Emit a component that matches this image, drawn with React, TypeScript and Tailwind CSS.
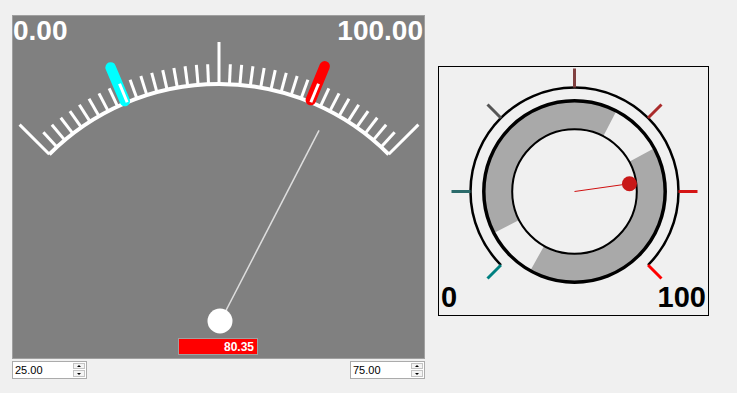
import React from "react";

const rad = (a: number) => (a * Math.PI) / 180;
const pt = (cx: number, cy: number, a: number, r: number): [number, number] => [
  cx + r * Math.sin(rad(a)),
  cy - r * Math.cos(rad(a)),
];
const arcPath = (cx: number, cy: number, r: number, a1: number, a2: number) => {
  const [x1, y1] = pt(cx, cy, a1, r);
  const [x2, y2] = pt(cx, cy, a2, r);
  const large = a2 - a1 > 180 ? 1 : 0;
  return `M ${x1} ${y1} A ${r} ${r} 0 ${large} 1 ${x2} ${y2}`;
};

function LeftGauge() {
  const cx = 219;
  const cy = 324;
  const ticks = [];
  for (let i = -18; i <= 18; i++) {
    const a = i * 2.5;
    const major = i % 18 === 0;
    const [x1, y1] = pt(cx, cy, a, 240);
    const [x2, y2] = pt(cx, cy, a, major ? 282 : 260);
    ticks.push(
      <line key={i} x1={x1} y1={y1} x2={x2} y2={y2} stroke="#ffffff" strokeWidth={3} />
    );
  }
  const marker = (a: number, color: string) => {
    const [x1, y1] = pt(cx, cy, a, 242);
    const [x2, y2] = pt(cx, cy, a, 278.5);
    return (
      <line x1={x1} y1={y1} x2={x2} y2={y2} stroke={color} strokeWidth={10.5} strokeLinecap="round" />
    );
  };
  const [nx, ny] = pt(cx, cy, -45 + 90 * 0.8035, 218);
  return (
    <svg className="block h-full w-full" viewBox="13 16 411 342" width={411} height={342}>
      <path d={arcPath(cx, cy, 240, -45, 45)} fill="none" stroke="#ffffff" strokeWidth={4} />
      {marker(-22.9, "#00ffff")}
      {marker(22.3, "#ff0000")}
      {ticks}
      <line x1={cx} y1={cy} x2={nx} y2={ny} stroke="#dedede" strokeWidth={1.5} />
      <circle cx={220} cy={321} r={12.5} fill="#ffffff" />
    </svg>
  );
}

function RightGauge() {
  const cx = 574.5;
  const cy = 191.5;
  const from = [0, 128, 128];
  const to = [255, 0, 0];
  const tickAngles = [-135, -90, -45, 0, 45, 90, 135];
  const [dx, dy] = pt(cx, cy, -135 + 270 * 0.8035, 55.5);
  return (
    <svg className="block h-full w-full" viewBox="439 67 269 248" width={269} height={248}>
      <circle cx={cx} cy={cy} r={76.5} fill="none" stroke="#a9a9a9" strokeWidth={28.4} />
      <path d={arcPath(cx, cy, 76.5, 27.5, 61.5)} fill="none" stroke="#f0f0f0" strokeWidth={29.5} />
      <path d={arcPath(cx, cy, 76.5, 209.2, 242.7)} fill="none" stroke="#f0f0f0" strokeWidth={29.5} />
      <circle cx={cx} cy={cy} r={90.7} fill="none" stroke="#000000" strokeWidth={3.5} />
      <circle cx={cx} cy={cy} r={62.3} fill="none" stroke="#000000" strokeWidth={2} />
      <path d={arcPath(cx, cy, 104, -135, 135)} fill="none" stroke="#000000" strokeWidth={2.5} />
      {tickAngles.map((a, i) => {
        const t = i / 6;
        const c = from.map((f, k) => Math.round(f + (to[k] - f) * t));
        const [x1, y1] = pt(cx, cy, a, 104);
        const [x2, y2] = pt(cx, cy, a, 123);
        return (
          <line
            key={a}
            x1={x1}
            y1={y1}
            x2={x2}
            y2={y2}
            stroke={`rgb(${c[0]},${c[1]},${c[2]})`}
            strokeWidth={3}
          />
        );
      })}
      <line x1={cx} y1={cy} x2={dx} y2={dy} stroke="#d01010" strokeWidth={1} />
      <circle cx={dx} cy={dy} r={7.5} fill="#c81818" />
    </svg>
  );
}

function Spin({ value }: { value: string }) {
  return (
    <div className="flex h-[18px] w-[75px] items-center border border-[#ababab] bg-white">
      <span className="flex-1 pl-[2px] text-[11px] leading-none text-black">{value}</span>
      <div className="mr-[1px] flex h-[14px] w-[12px] flex-col gap-[1px]">
        <div className="flex h-[6px] items-center justify-center border border-[#c4c4c4] bg-[#f4f4f4]">
          <div className="h-0 w-0 border-x-[2px] border-b-[2px] border-x-transparent border-b-black" />
        </div>
        <div className="flex h-[7px] items-center justify-center border border-[#c4c4c4] bg-[#f4f4f4]">
          <div className="h-0 w-0 border-x-[2px] border-t-[2px] border-x-transparent border-t-black" />
        </div>
      </div>
    </div>
  );
}

export default function App() {
  return (
    <div className="min-h-screen w-full bg-[#f0f0f0] font-['Liberation_Sans',Arial,sans-serif]">
      <div className="flex items-start pl-[12px] pt-[15px]">
        <div className="flex w-[413px] flex-col">
          <div className="relative h-[344px] w-[413px] border border-[#a0a0a0] bg-[#808080]">
            <LeftGauge />
            <div className="absolute left-0 top-[1px] text-[28px] font-bold leading-none text-white">0.00</div>
            <div className="absolute right-[1px] top-[1px] text-[28px] font-bold leading-none text-white">100.00</div>
            <div className="absolute left-[165px] top-[322px] flex h-[17px] w-[80px] items-center justify-end border border-[#a0a0a0] bg-[#ff0000] pr-[3px] text-[12px] font-bold leading-none text-white">
              80.35
            </div>
          </div>
          <div className="mt-[2px] flex justify-between">
            <Spin value="25.00" />
            <Spin value="75.00" />
          </div>
        </div>
        <div className="relative ml-[13px] mt-[51px] h-[250px] w-[271px] border border-black">
          <RightGauge />
          <div className="absolute left-[2px] top-[216px] text-[29px] font-bold leading-none text-black">0</div>
          <div className="absolute right-[2px] top-[216px] text-[29px] font-bold leading-none text-black">100</div>
        </div>
      </div>
    </div>
  );
}
